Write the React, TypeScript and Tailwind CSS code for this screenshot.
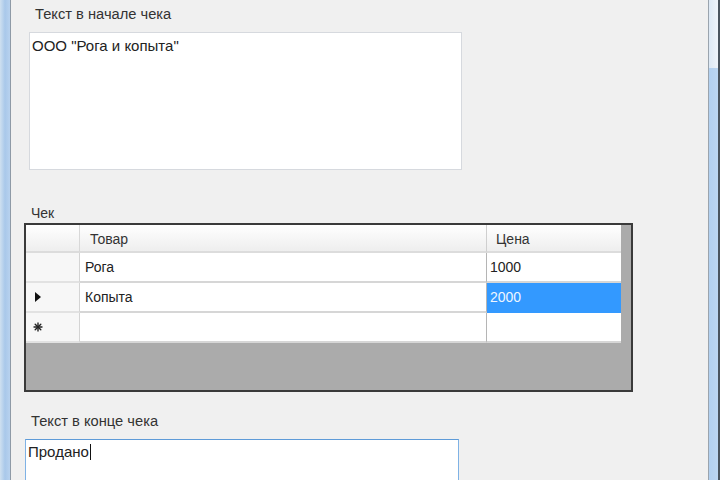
import React from "react";

const rows = [
  { name: "Рога", price: "1000", marker: "" },
  { name: "Копыта", price: "2000", marker: "current" },
  { name: "", price: "", marker: "new" },
];

function RowMarker({ kind }: { kind: string }) {
  if (kind === "current") {
    return (
      <svg width="6" height="10" viewBox="0 0 6 10" className="ml-[9px]">
        <path d="M0 0 L6 5 L0 10 Z" fill="#111" />
      </svg>
    );
  }
  if (kind === "new") {
    return (
      <svg width="10" height="10" viewBox="0 0 10 10" className="ml-[7px]">
        <g stroke="#222" strokeWidth="1.4" strokeLinecap="round">
          <path d="M5 1 V9" />
          <path d="M1 5 H9" />
          <path d="M2.2 2.2 L7.8 7.8" />
          <path d="M7.8 2.2 L2.2 7.8" />
        </g>
      </svg>
    );
  }
  return null;
}

export default function App() {
  return (
    <div
      className="w-[720px] h-[480px] flex overflow-hidden bg-[#f0f0f0] text-[14px] text-[#222]"
      style={{ fontFamily: '"Liberation Sans", Arial, sans-serif' }}
    >
      {/* left window frame */}
      <div className="w-[10px] h-full bg-gradient-to-r from-[#cfe0f0] via-[#a9c8ea] to-[#b8d2ef]" />
      <div className="w-[1px] h-full bg-[#8e9aa6]" />

      {/* form body */}
      <div className="flex-1 flex flex-col">
        <div className="shrink-0 pl-[24px] pt-[6px] leading-[17px] text-[14.7px] text-[#333]">
          Текст в начале чека
        </div>
        <div className="shrink-0 ml-[18px] mt-[9px] w-[433px] h-[138px] bg-white border border-[#d6d9de] px-[2px] pt-[5px] leading-[16px] text-[15px]">
          ООО "Рога и копыта"
        </div>

        <div className="shrink-0 pl-[20px] mt-[35px] leading-[16px] text-[#333]">
          Чек
        </div>
        <div className="shrink-0 ml-[13px] mt-[2px] w-[609px] h-[169px] bg-[#ababab] border-2 border-[#3a3a3a] flex flex-col">
          {/* header */}
          <div className="flex h-[28px]">
            <div className="w-[54px] bg-gradient-to-b from-[#ffffff] to-[#eeeeee] border-r border-[#d8d8d8] border-b-2 border-b-[#dcdcdc]" />
            <div className="w-[407px] bg-gradient-to-b from-[#ffffff] to-[#eeeeee] border-r border-[#cfcfcf] border-b-2 border-b-[#dcdcdc] pl-[10px] pt-[6px] leading-[16px] text-[#333]">
              Товар
            </div>
            <div className="w-[134px] bg-gradient-to-b from-[#ffffff] to-[#eeeeee] border-b-2 border-b-[#dcdcdc] pl-[9px] pt-[6px] leading-[16px] text-[#333]">
              Цена
            </div>
          </div>
          {rows.map((r, i) => (
            <div key={i} className="flex h-[30px]">
              <div className="w-[54px] bg-[#f7f7f7] border-r border-[#d4d4d4] border-b-2 border-b-[#e2e2e2] flex items-center">
                <RowMarker kind={r.marker} />
              </div>
              <div className="w-[407px] bg-white border-r border-[#b5b5b5] border-b-2 border-b-[#d6d6d6] pl-[5px] flex items-center">
                {r.name}
              </div>
              <div
                className={
                  r.marker === "current"
                    ? "w-[134px] bg-[#3399ff] text-[#eef6ff] border-b-2 border-b-[#3399ff] pl-[3px] flex items-center"
                    : "w-[134px] bg-white border-b-2 border-b-[#d6d6d6] pl-[3px] flex items-center"
                }
              >
                {r.price}
              </div>
            </div>
          ))}
        </div>

        <div className="shrink-0 pl-[20px] mt-[21px] leading-[17px] text-[14.7px] text-[#333]">
          Текст в конце чека
        </div>
        <div className="shrink-0 ml-[14px] mt-[9px] w-[434px] h-[60px] bg-white border border-[#7fb2e5] border-t-[#5e9bd8] px-[2px] pt-[4px] leading-[16px] text-[15px] flex items-start">
          <span>Продано</span>
          <span className="w-[1px] h-[16px] bg-[#111] ml-[1px]" />
        </div>
      </div>

      {/* right window frame */}
      <div className="w-[1px] h-full bg-[#9aa4ae]" />
      <div className="w-[9px] h-full flex flex-col">
        <div className="h-[68px] bg-gradient-to-r from-[#dde9f5] to-[#eef4fb]" />
        <div className="flex-1 bg-gradient-to-r from-[#b2d0f0] to-[#bcd6f2]" />
      </div>
      <div className="w-[2px] h-full bg-[#4a5560]" />
    </div>
  );
}
